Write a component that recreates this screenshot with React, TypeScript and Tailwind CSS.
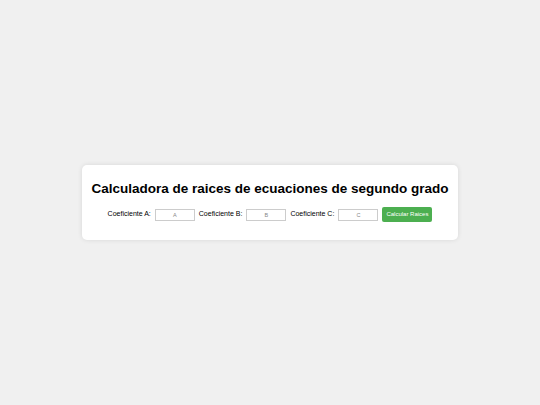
export default function App() {
  return (
    <div
      className="flex min-h-screen items-center justify-center bg-[#f0f0f0]"
      style={{ fontFamily: '"Liberation Sans", Arial, sans-serif' }}
    >
      <div className="rounded-[5px] bg-white px-[9px] pb-[18px] pt-[15px] shadow-[0_0_5px_rgba(0,0,0,0.1)]">
        <h1 className="mb-[9px] text-center text-[13.5px] font-bold leading-[18px] text-black">
          Calculadora de raices de ecuaciones de segundo grado
        </h1>
        <div className="flex items-center justify-center gap-[4px] text-[7px] text-black">
          <label>Coeficiente A:</label>
          <input
            placeholder="A"
            className="h-[12px] w-[40px] border border-[#ccc] text-center text-[5.5px] outline-none placeholder:text-[#888]"
          />
          <label>Coeficiente B:</label>
          <input
            placeholder="B"
            className="h-[12px] w-[40px] border border-[#ccc] text-center text-[5.5px] outline-none placeholder:text-[#888]"
          />
          <label>Coeficiente C:</label>
          <input
            placeholder="C"
            className="h-[12px] w-[40px] border border-[#ccc] text-center text-[5.5px] outline-none placeholder:text-[#888]"
          />
          <button className="h-[15px] rounded-[2px] bg-[#4caf50] px-[4px] text-[6px] text-white">
            Calcular Raices
          </button>
        </div>
      </div>
    </div>
  );
}
